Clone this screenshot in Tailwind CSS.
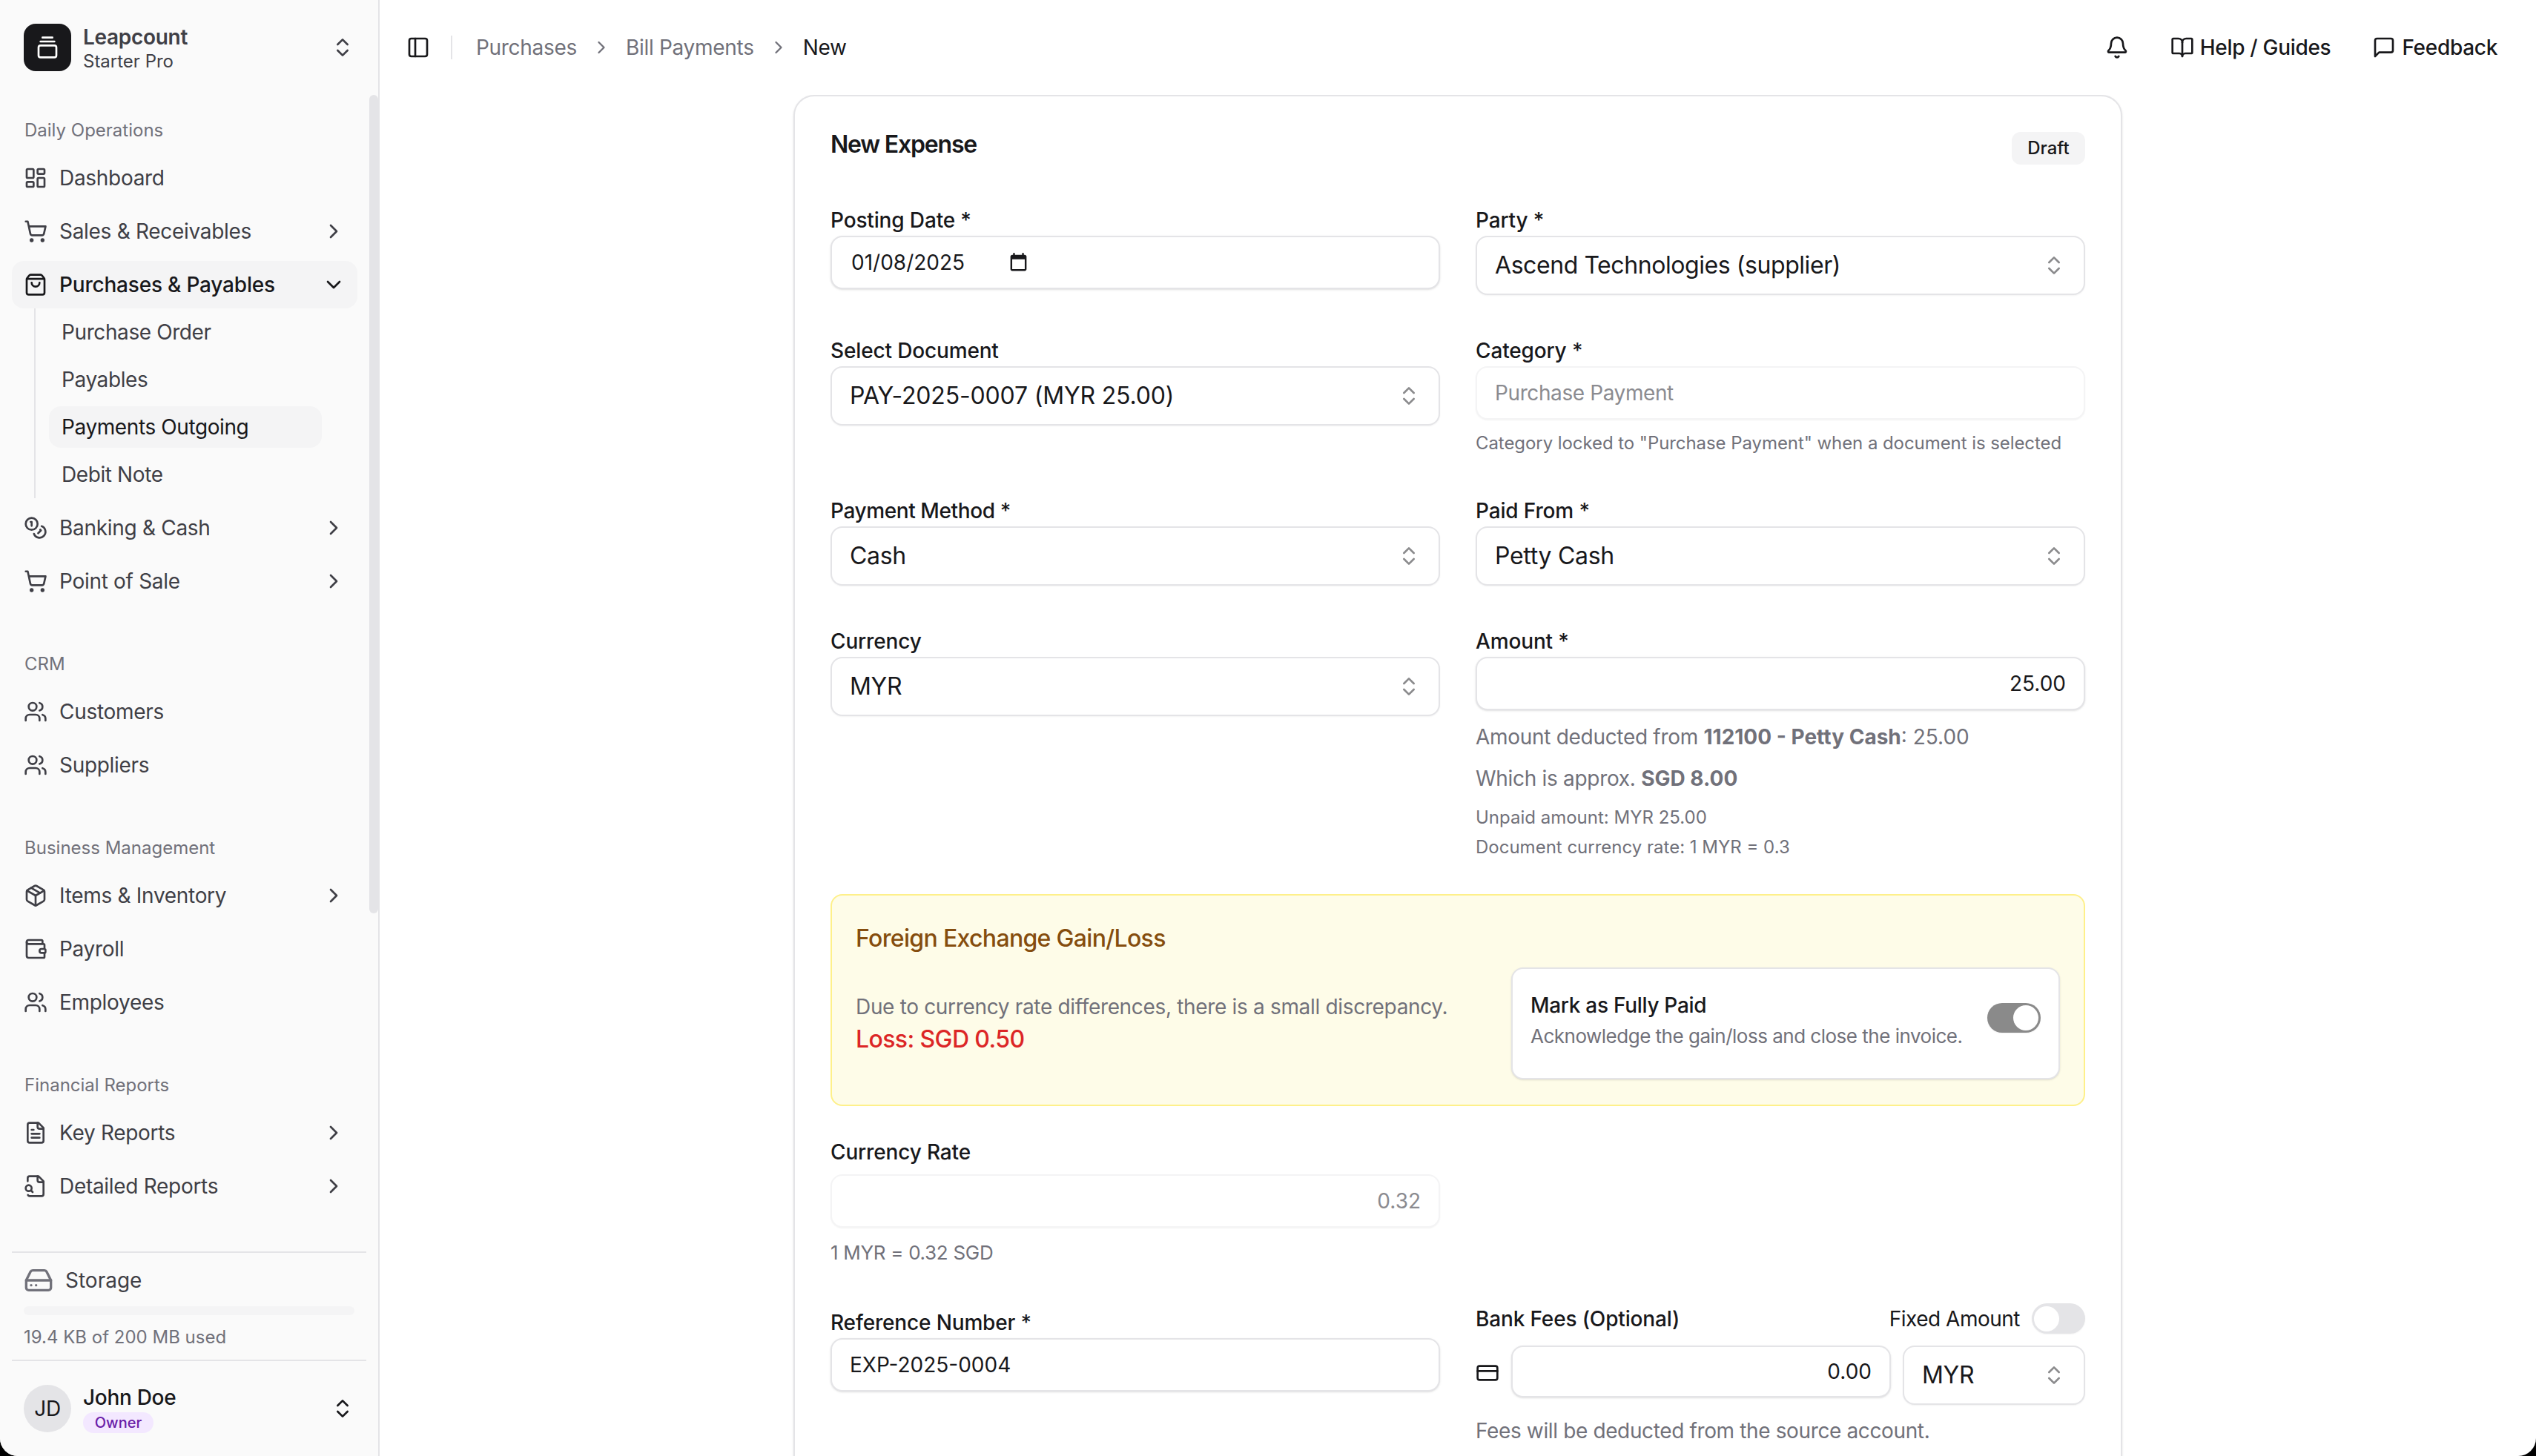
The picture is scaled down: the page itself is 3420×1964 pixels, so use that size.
<!DOCTYPE html>
<html lang="en">
<head>
<meta charset="utf-8">
<title>New Expense</title>
<script src="https://cdn.jsdelivr.net/npm/@tailwindcss/browser@4"></script>
</head>
<body class="m-0 bg-black">
<div class="flex h-[1964px] w-[3420px] overflow-hidden rounded-b-[24px] bg-white font-['Inter',sans-serif] text-[28px] tracking-[-0.3px] text-[#18181b]">

  <!-- Sidebar -->
  <aside class="flex h-full w-[512px] shrink-0 flex-col border-r-2 border-[#e4e4e7] bg-[#fafafa]">
    <div class="flex h-[128px] shrink-0 items-center pl-[32px] pr-[32px]">
      <div class="flex size-[64px] items-center justify-center rounded-[16px] bg-[#18181b] text-white">
        <svg class="size-[32px]" viewBox="0 0 24 24" fill="none" stroke="currentColor" stroke-width="2" stroke-linecap="round" stroke-linejoin="round"><path d="M7 2h10"/><path d="M5 6h14"/><rect width="18" height="12" x="3" y="10" rx="2"/></svg>
      </div>
      <div class="ml-[16px] flex-1 pt-[2px]">
        <div class="text-[28px] font-semibold leading-[36px] text-[#3f3f46]">Leapcount</div>
        <div class="text-[24px] leading-[30px] tracking-normal text-[#3f3f46]">Starter Pro</div>
      </div>
      <svg class="size-[32px] text-[#3f3f46]" viewBox="0 0 24 24" fill="none" stroke="currentColor" stroke-width="2" stroke-linecap="round" stroke-linejoin="round"><path d="m7 15 5 5 5-5"/><path d="m7 9 5-5 5 5"/></svg>
    </div>

    <div class="relative min-h-0 flex-1 overflow-hidden">
      <div class="absolute right-0 top-0 h-[1104px] w-[12px] rounded-[8px] bg-[#e4e4e7]"></div>
      <nav class="flex flex-col gap-[16px] pr-[12px] text-[#3f3f46]">
        <section class="flex flex-col p-[16px]">
          <div class="flex h-[64px] items-center px-[17px] text-[24px] tracking-normal text-[#71717a]">Daily Operations</div>
          <div class="flex flex-col gap-[8px]">
            <a class="flex h-[64px] items-center gap-[16px] rounded-[16px] px-[16px]">
              <svg class="size-[32px] shrink-0" viewBox="0 0 24 24" fill="none" stroke="currentColor" stroke-width="2" stroke-linecap="round" stroke-linejoin="round"><rect width="7" height="9" x="3" y="3" rx="1"/><rect width="7" height="5" x="14" y="3" rx="1"/><rect width="7" height="9" x="14" y="12" rx="1"/><rect width="7" height="5" x="3" y="16" rx="1"/></svg>
              <span class="flex-1">Dashboard</span>
            </a>
            <a class="flex h-[64px] items-center gap-[16px] rounded-[16px] px-[16px]">
              <svg class="size-[32px] shrink-0" viewBox="0 0 24 24" fill="none" stroke="currentColor" stroke-width="2" stroke-linecap="round" stroke-linejoin="round"><circle cx="8" cy="21" r="1"/><circle cx="19" cy="21" r="1"/><path d="M2.05 2.05h2l2.66 12.42a2 2 0 0 0 2 1.58h9.78a2 2 0 0 0 1.95-1.57l1.65-7.43H5.12"/></svg>
              <span class="flex-1">Sales &amp; Receivables</span>
              <svg class="size-[32px] shrink-0" viewBox="0 0 24 24" fill="none" stroke="currentColor" stroke-width="2" stroke-linecap="round" stroke-linejoin="round"><path d="m9 18 6-6-6-6"/></svg>
            </a>
            <a class="flex h-[64px] items-center gap-[16px] rounded-[16px] bg-[#f4f4f5] px-[16px] font-medium tracking-[-0.2px] text-[#18181b]">
              <svg class="size-[32px] shrink-0" viewBox="0 0 24 24" fill="none" stroke="currentColor" stroke-width="2" stroke-linecap="round" stroke-linejoin="round"><path d="M16 10a4 4 0 0 1-8 0"/><path d="M3.103 6.034h17.794"/><path d="M3.4 5.467a2 2 0 0 0-.4 1.2V20a2 2 0 0 0 2 2h14a2 2 0 0 0 2-2V6.667a2 2 0 0 0-.4-1.2l-2-2.667A2 2 0 0 0 17 2H7a2 2 0 0 0-1.6.8z"/></svg>
              <span class="flex-1">Purchases &amp; Payables</span>
              <svg class="size-[32px] shrink-0" viewBox="0 0 24 24" fill="none" stroke="currentColor" stroke-width="2" stroke-linecap="round" stroke-linejoin="round"><path d="m6 9 6 6 6-6"/></svg>
            </a>
            <div class="-my-[8px] ml-[30px] flex w-[388px] flex-col gap-[8px] border-l-2 border-[#e4e4e7] py-[4px] pl-[18px] tracking-[-0.4px]">
              <a class="flex h-[56px] items-center rounded-[16px] px-[17px]">Purchase Order</a>
              <a class="flex h-[56px] items-center rounded-[16px] px-[17px]">Payables</a>
              <a class="flex h-[56px] items-center rounded-[16px] bg-[#f4f4f5] px-[17px] text-[#18181b]">Payments Outgoing</a>
              <a class="flex h-[56px] items-center rounded-[16px] px-[17px]">Debit Note</a>
            </div>
            <a class="mt-[8px] flex h-[64px] items-center gap-[16px] rounded-[16px] px-[16px]">
              <svg class="size-[32px] shrink-0" viewBox="0 0 24 24" fill="none" stroke="currentColor" stroke-width="2" stroke-linecap="round" stroke-linejoin="round"><circle cx="8" cy="8" r="6"/><path d="M18.09 10.37A6 6 0 1 1 10.34 18"/><path d="M7 6h1v4"/><path d="m16.71 13.88.7.71-2.82 2.82"/></svg>
              <span class="flex-1">Banking &amp; Cash</span>
              <svg class="size-[32px] shrink-0" viewBox="0 0 24 24" fill="none" stroke="currentColor" stroke-width="2" stroke-linecap="round" stroke-linejoin="round"><path d="m9 18 6-6-6-6"/></svg>
            </a>
            <a class="flex h-[64px] items-center gap-[16px] rounded-[16px] px-[16px]">
              <svg class="size-[32px] shrink-0" viewBox="0 0 24 24" fill="none" stroke="currentColor" stroke-width="2" stroke-linecap="round" stroke-linejoin="round"><circle cx="8" cy="21" r="1"/><circle cx="19" cy="21" r="1"/><path d="M2.05 2.05h2l2.66 12.42a2 2 0 0 0 2 1.58h9.78a2 2 0 0 0 1.95-1.57l1.65-7.43H5.12"/></svg>
              <span class="flex-1">Point of Sale</span>
              <svg class="size-[32px] shrink-0" viewBox="0 0 24 24" fill="none" stroke="currentColor" stroke-width="2" stroke-linecap="round" stroke-linejoin="round"><path d="m9 18 6-6-6-6"/></svg>
            </a>
          </div>
        </section>

        <section class="flex flex-col p-[16px]">
          <div class="flex h-[64px] items-center px-[17px] text-[24px] tracking-normal text-[#71717a]">CRM</div>
          <div class="flex flex-col gap-[8px]">
            <a class="flex h-[64px] items-center gap-[16px] rounded-[16px] px-[16px]">
              <svg class="size-[32px] shrink-0" viewBox="0 0 24 24" fill="none" stroke="currentColor" stroke-width="2" stroke-linecap="round" stroke-linejoin="round"><path d="M16 21v-2a4 4 0 0 0-4-4H6a4 4 0 0 0-4 4v2"/><circle cx="9" cy="7" r="4"/><path d="M16 3.128a4 4 0 0 1 0 7.744"/><path d="M22 21v-2a4 4 0 0 0-3-3.87"/></svg>
              <span class="flex-1">Customers</span>
            </a>
            <a class="flex h-[64px] items-center gap-[16px] rounded-[16px] px-[16px]">
              <svg class="size-[32px] shrink-0" viewBox="0 0 24 24" fill="none" stroke="currentColor" stroke-width="2" stroke-linecap="round" stroke-linejoin="round"><path d="M16 21v-2a4 4 0 0 0-4-4H6a4 4 0 0 0-4 4v2"/><circle cx="9" cy="7" r="4"/><path d="M16 3.128a4 4 0 0 1 0 7.744"/><path d="M22 21v-2a4 4 0 0 0-3-3.87"/></svg>
              <span class="flex-1">Suppliers</span>
            </a>
          </div>
        </section>

        <section class="flex flex-col p-[16px]">
          <div class="flex h-[64px] items-center px-[17px] text-[24px] tracking-normal text-[#71717a]">Business Management</div>
          <div class="flex flex-col gap-[8px]">
            <a class="flex h-[64px] items-center gap-[16px] rounded-[16px] px-[16px]">
              <svg class="size-[32px] shrink-0" viewBox="0 0 24 24" fill="none" stroke="currentColor" stroke-width="2" stroke-linecap="round" stroke-linejoin="round"><path d="M11 21.73a2 2 0 0 0 2 0l7-4A2 2 0 0 0 21 16V8a2 2 0 0 0-1-1.73l-7-4a2 2 0 0 0-2 0l-7 4A2 2 0 0 0 3 8v8a2 2 0 0 0 1 1.73z"/><path d="M12 22V12"/><polyline points="3.29 7 12 12 20.71 7"/><path d="m7.5 4.27 9 5.15"/></svg>
              <span class="flex-1">Items &amp; Inventory</span>
              <svg class="size-[32px] shrink-0" viewBox="0 0 24 24" fill="none" stroke="currentColor" stroke-width="2" stroke-linecap="round" stroke-linejoin="round"><path d="m9 18 6-6-6-6"/></svg>
            </a>
            <a class="flex h-[64px] items-center gap-[16px] rounded-[16px] px-[16px]">
              <svg class="size-[32px] shrink-0" viewBox="0 0 24 24" fill="none" stroke="currentColor" stroke-width="2" stroke-linecap="round" stroke-linejoin="round"><path d="M19 7V4a1 1 0 0 0-1-1H5a2 2 0 0 0 0 4h15a1 1 0 0 1 1 1v4h-3a2 2 0 0 0 0 4h3a1 1 0 0 0 1-1v-2a1 1 0 0 0-1-1"/><path d="M3 5v14a2 2 0 0 0 2 2h15a1 1 0 0 0 1-1v-4"/></svg>
              <span class="flex-1">Payroll</span>
            </a>
            <a class="flex h-[64px] items-center gap-[16px] rounded-[16px] px-[16px]">
              <svg class="size-[32px] shrink-0" viewBox="0 0 24 24" fill="none" stroke="currentColor" stroke-width="2" stroke-linecap="round" stroke-linejoin="round"><path d="M16 21v-2a4 4 0 0 0-4-4H6a4 4 0 0 0-4 4v2"/><circle cx="9" cy="7" r="4"/><path d="M16 3.128a4 4 0 0 1 0 7.744"/><path d="M22 21v-2a4 4 0 0 0-3-3.87"/></svg>
              <span class="flex-1">Employees</span>
            </a>
          </div>
        </section>

        <section class="flex flex-col p-[16px]">
          <div class="flex h-[64px] items-center px-[17px] text-[24px] tracking-normal text-[#71717a]">Financial Reports</div>
          <div class="flex flex-col gap-[8px]">
            <a class="flex h-[64px] items-center gap-[16px] rounded-[16px] px-[16px]">
              <svg class="size-[32px] shrink-0" viewBox="0 0 24 24" fill="none" stroke="currentColor" stroke-width="2" stroke-linecap="round" stroke-linejoin="round"><path d="M15 2H6a2 2 0 0 0-2 2v16a2 2 0 0 0 2 2h12a2 2 0 0 0 2-2V7Z"/><path d="M14 2v4a2 2 0 0 0 2 2h4"/><path d="M10 9H8"/><path d="M16 13H8"/><path d="M16 17H8"/></svg>
              <span class="flex-1">Key Reports</span>
              <svg class="size-[32px] shrink-0" viewBox="0 0 24 24" fill="none" stroke="currentColor" stroke-width="2" stroke-linecap="round" stroke-linejoin="round"><path d="m9 18 6-6-6-6"/></svg>
            </a>
            <a class="flex h-[64px] items-center gap-[16px] rounded-[16px] px-[16px]">
              <svg class="size-[32px] shrink-0" viewBox="0 0 24 24" fill="none" stroke="currentColor" stroke-width="2" stroke-linecap="round" stroke-linejoin="round"><path d="M14 2v4a2 2 0 0 0 2 2h4"/><path d="M4.268 21a2 2 0 0 0 1.727 1H18a2 2 0 0 0 2-2V7l-5-5H6a2 2 0 0 0-2 2v3"/><path d="m9 18-1.5-1.5"/><circle cx="5" cy="14" r="3"/></svg>
              <span class="flex-1">Detailed Reports</span>
              <svg class="size-[32px] shrink-0" viewBox="0 0 24 24" fill="none" stroke="currentColor" stroke-width="2" stroke-linecap="round" stroke-linejoin="round"><path d="m9 18 6-6-6-6"/></svg>
            </a>
          </div>
        </section>
      </nav>
    </div>

    <div class="mx-[16px] h-[146px] shrink-0 border-t-2 border-[#e4e4e7] px-[16px]">
      <div class="flex h-[72px] items-center gap-[16px] pt-[2px] tracking-normal text-[#3f3f46]">
        <svg class="size-[40px] shrink-0 text-[#71717a]" viewBox="0 0 24 24" fill="none" stroke="currentColor" stroke-width="2" stroke-linecap="round" stroke-linejoin="round"><line x1="22" x2="2" y1="12" y2="12"/><path d="M5.45 5.11 2 12v6a2 2 0 0 0 2 2h16a2 2 0 0 0 2-2v-6l-3.45-6.89A2 2 0 0 0 16.76 4H7.24a2 2 0 0 0-1.79 1.11z"/><line x1="6" x2="6.01" y1="16" y2="16"/><line x1="10" x2="10.01" y1="16" y2="16"/></svg>
        <span>Storage</span>
      </div>
      <div class="h-[12px] w-[446px] rounded-full bg-[#f4f4f5]"></div>
      <div class="mt-[14px] text-[24px] leading-[32px] tracking-normal text-[#71717a]">19.4 KB of 200 MB used</div>
    </div>
    <div class="mx-[16px] flex h-[130px] shrink-0 items-center border-t-2 border-[#e4e4e7] pl-[16px] pr-[16px]">
      <div class="flex size-[64px] items-center justify-center rounded-full bg-[#e4e4e7] text-[28px]">JD</div>
      <div class="ml-[16px] flex-1">
        <div class="text-[28px] font-medium leading-[36px]">John Doe</div>
        <div class="mt-[2px] flex h-[28px] w-[95px] items-center justify-center rounded-full bg-[#f3e8ff] text-[20px] font-medium tracking-normal text-[#6b21a8]">Owner</div>
      </div>
      <svg class="size-[32px]" viewBox="0 0 24 24" fill="none" stroke="currentColor" stroke-width="2" stroke-linecap="round" stroke-linejoin="round"><path d="m7 15 5 5 5-5"/><path d="m7 9 5-5 5 5"/></svg>
    </div>
  </aside>

  <!-- Main -->
  <main class="flex h-full min-w-0 flex-1 flex-col">
    <header class="flex h-[128px] shrink-0 items-center pl-[36px] pr-[52px]">
      <svg class="size-[32px]" viewBox="0 0 24 24" fill="none" stroke="currentColor" stroke-width="2" stroke-linecap="round" stroke-linejoin="round"><rect width="18" height="18" x="3" y="3" rx="2"/><path d="M9 3v18"/></svg>
      <div class="ml-[28px] mr-[32px] h-[32px] w-[2px] bg-[#e4e4e7]"></div>
      <nav class="flex items-center gap-[19px] text-[#71717a]">
        <span>Purchases</span>
        <svg class="size-[28px]" viewBox="0 0 24 24" fill="none" stroke="currentColor" stroke-width="2" stroke-linecap="round" stroke-linejoin="round"><path d="m9 18 6-6-6-6"/></svg>
        <span>Bill Payments</span>
        <svg class="size-[28px]" viewBox="0 0 24 24" fill="none" stroke="currentColor" stroke-width="2" stroke-linecap="round" stroke-linejoin="round"><path d="m9 18 6-6-6-6"/></svg>
        <span class="text-[#18181b]">New</span>
      </nav>
      <div class="ml-auto flex items-center font-medium">
        <svg class="size-[32px]" viewBox="0 0 24 24" fill="none" stroke="currentColor" stroke-width="2" stroke-linecap="round" stroke-linejoin="round"><path d="M10.268 21a2 2 0 0 0 3.464 0"/><path d="M3.262 15.326A1 1 0 0 0 4 17h16a1 1 0 0 0 .74-1.673C19.41 13.956 18 12.499 18 8A6 6 0 0 0 6 8c0 4.499-1.411 5.956-2.738 7.326"/></svg>
        <div class="ml-[56px] flex items-center gap-[8px]">
          <svg class="size-[32px]" viewBox="0 0 24 24" fill="none" stroke="currentColor" stroke-width="2" stroke-linecap="round" stroke-linejoin="round"><path d="M12 7v14"/><path d="M3 18a1 1 0 0 1-1-1V4a1 1 0 0 1 1-1h5a4 4 0 0 1 4 4 4 4 0 0 1 4-4h5a1 1 0 0 1 1 1v13a1 1 0 0 1-1 1h-6a3 3 0 0 0-3 3 3 3 0 0 0-3-3z"/></svg>
          <span>Help / Guides</span>
        </div>
        <div class="ml-[56px] flex items-center gap-[8px]">
          <svg class="size-[32px]" viewBox="0 0 24 24" fill="none" stroke="currentColor" stroke-width="2" stroke-linecap="round" stroke-linejoin="round"><path d="M21 15a2 2 0 0 1-2 2H7l-4 4V5a2 2 0 0 1 2-2h14a2 2 0 0 1 2 2z"/></svg>
          <span>Feedback</span>
        </div>
      </div>
    </header>

    <div class="min-h-0 flex-1 overflow-hidden">
      <div class="mx-auto w-[1792px] rounded-[28px] border-2 border-[#e4e4e7] bg-white px-[48px] pb-[48px] pt-[48px] shadow-sm">
        <div class="flex h-[98px] items-start justify-between">
          <h1 class="text-[32px] font-semibold leading-[34px] tracking-[-1.2px]">New Expense</h1>
          <span class="flex h-[44px] w-[99px] items-center justify-center rounded-[12px] bg-[#f4f4f5] text-[24px] font-medium tracking-normal">Draft</span>
        </div>

        <div class="grid grid-cols-2 gap-x-[48px] gap-y-[54px]">
          <div>
            <label class="flex h-[42px] items-center font-medium tracking-[-0.15px]">Posting Date *</label>
            <div class="flex h-[72px] items-center rounded-[16px] border-2 border-[#e4e4e7] bg-white pl-[26px] tracking-normal shadow-sm">
              <span>01/08/2025</span>
              <svg class="ml-[58px] size-[29px]" viewBox="0 0 24 24" fill="currentColor"><path d="M19 3h-1V1h-2v2H8V1H6v2H5c-1.11 0-1.99.9-1.99 2L3 19c0 1.1.89 2 2 2h14c1.1 0 2-.9 2-2V5c0-1.1-.9-2-2-2zm0 16H5V8h14v11z"/></svg>
            </div>
          </div>
          <div>
            <label class="flex h-[42px] items-center font-medium tracking-[-0.15px]">Party *</label>
            <div class="flex h-[80px] items-center justify-between rounded-[16px] border-2 border-[#e4e4e7] bg-white px-[24px] text-[32px] tracking-[-0.43px] shadow-xs">
              <span>Ascend Technologies (supplier)</span>
              <svg class="size-[32px] text-[#8b8b8d]" viewBox="0 0 24 24" fill="none" stroke="currentColor" stroke-width="2" stroke-linecap="round" stroke-linejoin="round"><path d="m7 15 5 5 5-5"/><path d="m7 9 5-5 5 5"/></svg>
            </div>
          </div>

          <div>
            <label class="flex h-[42px] items-center font-medium tracking-[-0.15px]">Select Document</label>
            <div class="flex h-[80px] items-center justify-between rounded-[16px] border-2 border-[#e4e4e7] bg-white px-[24px] text-[32px] tracking-[-0.17px] shadow-xs">
              <span>PAY-2025-0007 (MYR 25.00)</span>
              <svg class="size-[32px] text-[#8b8b8d]" viewBox="0 0 24 24" fill="none" stroke="currentColor" stroke-width="2" stroke-linecap="round" stroke-linejoin="round"><path d="m7 15 5 5 5-5"/><path d="m7 9 5-5 5 5"/></svg>
            </div>
          </div>
          <div>
            <label class="flex h-[42px] items-center font-medium tracking-[-0.15px]">Category *</label>
            <div class="flex h-[72px] items-center rounded-[16px] border-2 border-[#f4f4f5] bg-white px-[24px] tracking-[-0.4px] text-[#8b8b90] shadow-xs">Purchase Payment</div>
            <p class="mt-[16px] text-[24px] leading-[32px] tracking-[-0.07px] text-[#71717a]">Category locked to "Purchase Payment" when a document is selected</p>
          </div>

          <div>
            <label class="flex h-[42px] items-center font-medium tracking-[-0.4px]">Payment Method *</label>
            <div class="flex h-[80px] items-center justify-between rounded-[16px] border-2 border-[#e4e4e7] bg-white px-[24px] text-[32px] shadow-xs">
              <span>Cash</span>
              <svg class="size-[32px] text-[#8b8b8d]" viewBox="0 0 24 24" fill="none" stroke="currentColor" stroke-width="2" stroke-linecap="round" stroke-linejoin="round"><path d="m7 15 5 5 5-5"/><path d="m7 9 5-5 5 5"/></svg>
            </div>
          </div>
          <div>
            <label class="flex h-[42px] items-center font-medium tracking-[-0.15px]">Paid From *</label>
            <div class="flex h-[80px] items-center justify-between rounded-[16px] border-2 border-[#e4e4e7] bg-white px-[24px] text-[32px] shadow-xs">
              <span>Petty Cash</span>
              <svg class="size-[32px] text-[#8b8b8d]" viewBox="0 0 24 24" fill="none" stroke="currentColor" stroke-width="2" stroke-linecap="round" stroke-linejoin="round"><path d="m7 15 5 5 5-5"/><path d="m7 9 5-5 5 5"/></svg>
            </div>
          </div>

          <div>
            <label class="flex h-[42px] items-center font-medium tracking-[-0.15px]">Currency</label>
            <div class="flex h-[80px] items-center justify-between rounded-[16px] border-2 border-[#e4e4e7] bg-white px-[24px] text-[32px] shadow-xs">
              <span>MYR</span>
              <svg class="size-[32px] text-[#8b8b8d]" viewBox="0 0 24 24" fill="none" stroke="currentColor" stroke-width="2" stroke-linecap="round" stroke-linejoin="round"><path d="m7 15 5 5 5-5"/><path d="m7 9 5-5 5 5"/></svg>
            </div>
          </div>
          <div>
            <label class="flex h-[42px] items-center font-medium tracking-[-0.15px]">Amount *</label>
            <div class="flex h-[72px] items-center justify-end rounded-[16px] border-2 border-[#e4e4e7] bg-white px-[24px] tracking-normal shadow-sm">25.00</div>
            <p class="mt-[16px] leading-[40px] text-[#71717a]">Amount deducted from <b class="font-bold tracking-normal">112100 - Petty Cash</b><span class="tracking-normal">: 25.00</span></p>
            <p class="mt-[16px] leading-[40px] text-[#71717a]">Which is approx. <b class="font-bold tracking-normal">SGD 8.00</b></p>
            <p class="mt-[17px] text-[24px] leading-[32px] tracking-normal text-[#71717a]">Unpaid amount: MYR 25.00</p>
            <p class="mt-[8px] text-[24px] leading-[32px] tracking-normal text-[#71717a]">Document currency rate: 1 MYR = 0.3</p>
          </div>
        </div>

        <div class="mt-[47px] h-[286px] rounded-[16px] border-2 border-[#fef08a] bg-[#fefce8] px-[32px] pt-[32px]">
          <h2 class="text-[32px] font-medium leading-[52px] tracking-[-0.67px] text-[#854d0e]">Foreign Exchange Gain/Loss</h2>
          <div class="mt-[13px] flex items-center justify-between">
            <div>
              <p class="leading-[40px] tracking-[-0.33px] text-[#71717a]">Due to currency rate differences, there is a small discrepancy.</p>
              <p class="mt-[2px] text-[32px] font-medium leading-[44px] tracking-[-0.6px] text-[#dc2626]">Loss: SGD 0.50</p>
            </div>
            <div class="flex h-[151px] w-[740px] shrink-0 items-start justify-between rounded-[16px] border-2 border-[#e4e4e7] bg-white pl-[24px] pr-[24px] pt-[29px] shadow-sm">
              <div>
                <div class="font-medium leading-[40px]">Mark as Fully Paid</div>
                <div class="text-[26px] leading-[44px] tracking-[-0.5px] text-[#71717a]">Acknowledge the gain/loss and close the invoice.</div>
              </div>
              <div class="mt-[17px] flex h-[40px] w-[72px] items-center justify-end rounded-full bg-[#8a8a8a] pr-[3px] shadow-xs">
                <div class="size-[34px] rounded-full bg-white"></div>
              </div>
            </div>
          </div>
        </div>

        <div class="mt-[41px]">
          <label class="mb-[9px] flex h-[42px] items-center font-medium tracking-[-0.15px]">Currency Rate</label>
          <div class="flex h-[72px] w-[822px] items-center justify-end rounded-[16px] border-2 border-[#f4f4f5] bg-white px-[24px] tracking-normal text-[#8b8b90] shadow-xs">0.32</div>
          <p class="mt-[18px] text-[26px] leading-[32px] tracking-[-0.3px] text-[#71717a]">1 MYR = 0.32 SGD</p>
        </div>

        <div class="mt-[52px] grid grid-cols-2 gap-x-[48px]">
          <div class="pt-[5px]">
            <label class="flex h-[42px] items-center font-medium tracking-[-0.15px]">Reference Number *</label>
            <div class="flex h-[72px] items-center rounded-[16px] border-2 border-[#e4e4e7] bg-white px-[24px] tracking-normal shadow-sm">EXP-2025-0004</div>
          </div>
          <div>
            <div class="flex h-[41px] items-center justify-between">
              <label class="font-medium tracking-[-0.15px]">Bank Fees (Optional)</label>
              <div class="flex items-center gap-[16px]">
                <span class="tracking-[-0.5px]">Fixed Amount</span>
                <div class="flex h-[41px] w-[72px] items-center rounded-full bg-[#e4e4e7] pl-[3px] shadow-xs">
                  <div class="size-[34px] rounded-full bg-white"></div>
                </div>
              </div>
            </div>
            <div class="mt-[16px] flex items-start">
              <svg class="mt-[21px] size-[32px] shrink-0" viewBox="0 0 24 24" fill="none" stroke="currentColor" stroke-width="2" stroke-linecap="round" stroke-linejoin="round"><rect width="20" height="14" x="2" y="5" rx="2"/><line x1="2" x2="22" y1="10" y2="10"/></svg>
              <div class="ml-[16px] flex h-[70px] flex-1 items-center justify-end rounded-[16px] border-2 border-[#e4e4e7] bg-white px-[24px] tracking-normal shadow-sm">0.00</div>
              <div class="ml-[16px] flex h-[80px] w-[246px] items-center justify-between rounded-[16px] border-2 border-[#e4e4e7] bg-white px-[24px] text-[32px] shadow-xs">
                <span>MYR</span>
                <svg class="size-[32px] text-[#8b8b8d]" viewBox="0 0 24 24" fill="none" stroke="currentColor" stroke-width="2" stroke-linecap="round" stroke-linejoin="round"><path d="m7 15 5 5 5-5"/><path d="m7 9 5-5 5 5"/></svg>
              </div>
            </div>
            <p class="mt-[15px] leading-[40px] tracking-[-0.37px] text-[#71717a]">Fees will be deducted from the source account.</p>
          </div>
        </div>
      </div>
    </div>
  </main>
</div>
</body>
</html>
